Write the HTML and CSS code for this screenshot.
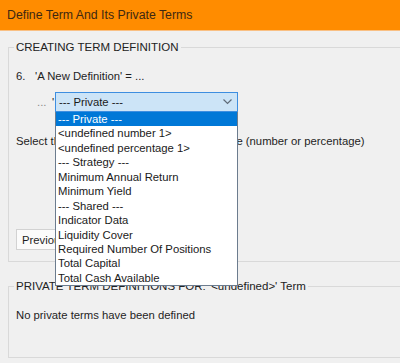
FILE: index.html
```html
<!DOCTYPE html>
<html>
<head>
<meta charset="utf-8">
<link rel="stylesheet" href="styles.css">
</head>
<body>
<div class="titlebar">Define Term And Its Private Terms</div>
<fieldset class="group first">
  <legend>CREATING TERM DEFINITION</legend>
  <div class="row def"><span class="num">6.</span><span>'A New Definition' = ...</span></div>
  <div class="row selrow">
    <span class="dots">...</span><span class="quote">'</span>
    <div class="combo">
      <div class="combo-box">
        <span>--- Private ---</span>
        <svg class="chev" width="9" height="6" viewBox="0 0 9 6"><polyline points="0.5,0.5 4.5,4.5 8.5,0.5" fill="none" stroke="#5f6b78" stroke-width="1.2"/></svg>
      </div>
      <ul class="list">
        <li class="sel">--- Private ---</li>
        <li>&lt;undefined number 1&gt;</li>
        <li>&lt;undefined percentage 1&gt;</li>
        <li>--- Strategy ---</li>
        <li>Minimum Annual Return</li>
        <li>Minimum Yield</li>
        <li>--- Shared ---</li>
        <li>Indicator Data</li>
        <li>Liquidity Cover</li>
        <li>Required Number Of Positions</li>
        <li>Total Capital</li>
        <li>Total Cash Available</li>
      </ul>
    </div>
  </div>
  <div class="row prompt">Select the type for the new private term value (number or percentage)</div>
  <div class="row btnrow"><button class="btn">Previous</button></div>
</fieldset>
<fieldset class="group second">
  <legend>PRIVATE TERM DEFINITIONS FOR: '&lt;undefined&gt;' Term</legend>
  <div class="row none">No private terms have been defined</div>
</fieldset>
</body>
</html>
```
FILE: styles.css
```css
html, body {
  margin: 0;
  padding: 0;
  overflow: hidden;
  background: #f0f0f0;
}
body {
  font-family: "Liberation Sans", Arial, sans-serif;
  font-size: 11.3px;
  color: #1e1e1e;
  width: 400px;
  height: 363px;
}
.titlebar {
  height: 30px;
  line-height: 30px;
  background: #ff8c00;
  color: #3d2812;
  font-size: 12.3px;
  padding-left: 7px;
  border-bottom: 1px solid #f9c084;
}
.group {
  margin: 0 0 0 8px;
  padding: 0 0 0 7px;
  border: 1px solid #d9d9d9;
  width: 420px;
  min-width: 0;
  box-sizing: border-box;
}
.group legend {
  padding: 0 2px;
  margin-left: -2px;
  font-size: 11.5px;
  line-height: 14px;
  height: 14px;
  color: #222;
}
.first {
  margin-top: 9px;
  padding-bottom: 11px;
}
.second {
  margin-top: 17px;
  padding-bottom: 35px;
}
.row {
  line-height: 14px;
}
.def {
  margin-top: 15px;
  display: flex;
}
.num {
  width: 19px;
}
.selrow {
  margin-top: 9px;
  display: flex;
  align-items: center;
  height: 20px;
}
.dots {
  margin-left: 21px;
  color: #8a8a8a;
  width: 15px;
}
.quote {
  width: 3px;
}
.combo {
  position: relative;
  width: 183px;
}
.combo-box {
  height: 20px;
  box-sizing: border-box;
  border: 1px solid #3d8ee0;
  background: #cce4f7;
  display: flex;
  align-items: center;
  justify-content: space-between;
  padding: 0 5px 0 3px;
  color: #1a1a1a;
}
.chev {
  display: block;
}
.list {
  position: absolute;
  top: 100%;
  left: 0;
  width: 183px;
  box-sizing: border-box;
  margin: 0;
  padding: 0;
  list-style: none;
  background: #fff;
  border: 1px solid #6c7c8e;
  border-top: none;
  z-index: 10;
}
.list li {
  height: 14.45px;
  line-height: 14.45px;
  padding-left: 2px;
  white-space: nowrap;
  color: #1a1a1a;
}
.list li.sel {
  background: #0078d7;
  color: #fff;
}
.prompt {
  margin-top: 22px;
  white-space: nowrap;
}
.btnrow {
  margin-top: 81px;
  display: flex;
}
.btn {
  height: 21px;
  box-sizing: border-box;
  border: 1px solid #d2d2d2;
  background: #fbfbfb;
  font-family: inherit;
  font-size: 11.3px;
  color: #1e1e1e;
  padding: 0 5px;
  width: 62px;
  text-align: left;
}
.none {
  margin-top: 15px;
}
```
